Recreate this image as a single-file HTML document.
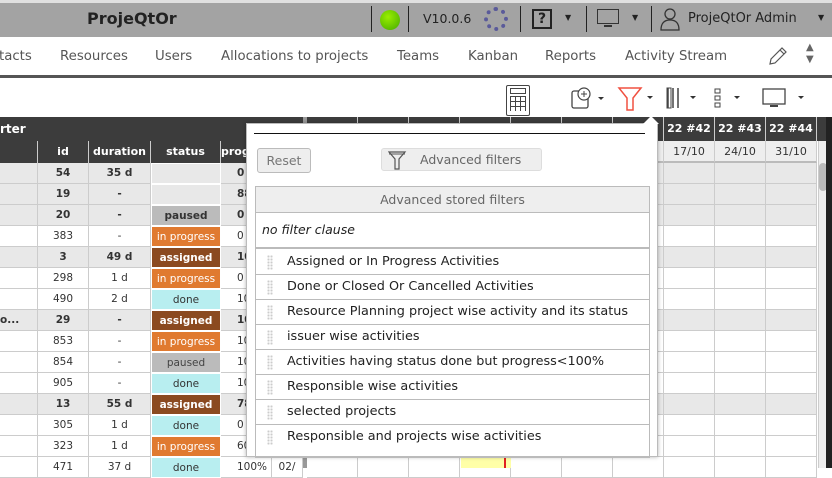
<!DOCTYPE html>
<html><head><meta charset="utf-8"><style>
*{box-sizing:border-box;margin:0;padding:0}
body{width:832px;height:468px;overflow:hidden;font-family:"DejaVu Sans","Liberation Sans",sans-serif;background:#fff;position:relative;font-size:13px;color:#333}
.abs{position:absolute}
#top{left:0;top:0;width:832px;height:37px;background:#a3a3a3;border-top:3px solid #e0e0e0}
#menu{left:0;top:37px;width:832px;height:41px;background:#fff;border-bottom:3px solid #555}
#menu span{position:absolute;top:12px;font-size:13.3px;color:#555;white-space:nowrap}
.th{background:#3c3c3c;color:#fff;font-weight:bold;font-size:11px}
.cell{position:absolute;text-align:center;font-size:10.5px;height:21px;line-height:20px;border-right:1px solid #ccc;border-bottom:1px solid #ccc;white-space:nowrap;overflow:hidden}
.pop{left:246px;top:123px;width:412px;height:334px;background:#fff;border:1px solid #bbb;box-shadow:0 0 4px rgba(0,0,0,.3)}
.item{position:absolute;left:8px;width:395px;height:25px;border-bottom:1px solid #bbb;font-size:12.8px;line-height:24px;padding-left:32px;color:#222;white-space:nowrap}
.grip{position:absolute;left:12px;top:5px;width:6px;height:15px;background-image:radial-gradient(#ccc 1px,transparent 1.2px);background-size:3px 3px}
</style></head><body>
<div id="top" class="abs">
 <div class="abs" style="left:87px;top:6px;font-weight:bold;font-size:16px;color:#222">ProjeQtOr</div>
 <div class="abs" style="left:371px;top:3px;width:1px;height:26px;background:#222"></div>
 <div class="abs" style="left:380px;top:7px;width:20px;height:20px;border-radius:50%;background:radial-gradient(circle at 40% 35%,#9e0,#4a0)"></div>
 <div class="abs" style="left:408px;top:3px;width:1px;height:26px;background:#222"></div>
 <div class="abs" style="left:423px;top:8px;font-size:12.5px;color:#222">V10.0.6</div>
 <div class="abs" style="left:484px;top:4px;width:24px;height:24px;border-radius:50%;border:4px dotted #5a5a9a"></div>
 <div class="abs" style="left:520px;top:3px;width:1px;height:26px;background:#222"></div>
 <div class="abs" style="left:532px;top:6px;width:20px;height:20px;border:2px solid #222;font-weight:bold;font-size:14px;text-align:center;line-height:16px;color:#222">?</div>
 <div class="abs" style="left:565px;top:10px;font-size:8px;color:#222">▼</div>
 <div class="abs" style="left:586px;top:3px;width:1px;height:26px;background:#222"></div>
 <div class="abs" style="left:597px;top:6px;width:22px;height:15px;border:1.5px solid #333"></div>
 <div class="abs" style="left:604px;top:22px;width:8px;height:2px;background:#333"></div>
 <div class="abs" style="left:632px;top:10px;font-size:8px;color:#222">▼</div>
 <div class="abs" style="left:651px;top:3px;width:1px;height:26px;background:#222"></div>
 <svg class="abs" style="left:660px;top:4px" width="20" height="24"><circle cx="10" cy="7" r="5" fill="none" stroke="#333" stroke-width="1.3"/><path d="M1 23 Q1 13 10 13 Q19 13 19 23 Z" fill="none" stroke="#333" stroke-width="1.3"/></svg>
 <div class="abs" style="left:688px;top:8px;font-size:13px;color:#222;white-space:nowrap">ProjeQtOr Admin</div>
 <div class="abs" style="left:818px;top:10px;font-size:8px;color:#222">▼</div>
</div>
<div id="menu" class="abs">
 <span style="left:-1px">tacts</span><span style="left:60px">Resources</span><span style="left:155px">Users</span><span style="left:221px">Allocations to projects</span><span style="left:397px">Teams</span><span style="left:468px">Kanban</span><span style="left:545px">Reports</span><span style="left:625px">Activity Stream</span>
 <svg class="abs" style="left:767px;top:8px" width="22" height="22"><path d="M3 19 L4 14 L15 3 L19 7 L8 18 Z M13 5 L17 9" fill="none" stroke="#555" stroke-width="1.2"/></svg>
 <div class="abs" style="left:806px;top:5px;font-size:10px;color:#666;line-height:12px">▲<br>▼</div>
</div>
<div class="abs" style="left:506px;top:85px;width:24px;height:31px;border:1.5px solid #444;border-radius:2px;background:#fff"><div style="margin:2px 3px;height:6px;border:1px solid #444"></div><div style="margin:1px 3px;height:15px;background-image:linear-gradient(#444 1px,transparent 1px),linear-gradient(90deg,#444 1px,transparent 1px);background-size:5px 5px"></div></div>
<svg class="abs" style="left:570px;top:86px" width="36" height="24"><rect x="2" y="5" width="16" height="17" rx="2" fill="none" stroke="#444" stroke-width="1.3"/><circle cx="14" cy="8" r="6" fill="#fff" stroke="#444" stroke-width="1.2"/><path d="M14 5v6M11 8h6" stroke="#444"/><path d="M28 11h6l-3 3z" fill="#333"/></svg>
<svg class="abs" style="left:617px;top:86px" width="40" height="26"><path d="M2 2h22l-8 10v12h-6V12z" fill="none" stroke="#f05040" stroke-width="1.5"/><path d="M30 10h6l-3 3z" fill="#333"/></svg>
<svg class="abs" style="left:665px;top:86px" width="36" height="24"><path d="M3 2v20M8 2v20M13 2v20" stroke="#444" stroke-width="1.5"/><rect x="2" y="2" width="4" height="20" fill="none" stroke="#444"/><path d="M25 10h6l-3 3z" fill="#333"/></svg>
<svg class="abs" style="left:712px;top:86px" width="36" height="24"><rect x="3" y="3" width="5" height="4" fill="none" stroke="#444"/><rect x="3" y="10" width="5" height="4" fill="none" stroke="#444"/><rect x="3" y="17" width="5" height="4" fill="none" stroke="#444"/><path d="M22 10h6l-3 3z" fill="#333"/></svg>
<svg class="abs" style="left:760px;top:86px" width="50" height="24"><rect x="3" y="3" width="22" height="15" fill="none" stroke="#444" stroke-width="1.3"/><path d="M10 20h8" stroke="#444" stroke-width="2"/><path d="M38 10h6l-3 3z" fill="#333"/></svg>

<div class="abs th" style="left:0;top:117px;width:305px;height:24px;line-height:24px;font-size:12px">rter</div>
<div class="abs" style="left:303px;top:117px;width:4px;height:351px;background:#999"></div>
<div class="abs th" style="left:307px;top:117px;width:525px;height:24px"></div>
<div class="abs th" style="left:0;top:141px;width:305px;height:22px"></div>
<div id="rows"></div>
<div class="abs" style="left:818px;top:141px;width:14px;height:327px;background:#eee;border-left:1px solid #ccc"></div>
<div class="abs" style="left:819px;top:163px;width:8px;height:28px;background:#bbb;border-radius:4px"></div>
<div class="abs" style="left:826px;top:117px;width:6px;height:351px;background:#222"></div>
<div class="abs" style="left:461px;top:457px;width:50px;height:11px;background:#ffffa8"></div>
<div class="abs" style="left:504px;top:457px;width:2px;height:11px;background:#e02020"></div>

<div class="abs pop">
 <div class="abs" style="left:7px;top:9px;width:391px;height:1px;background:#111"></div>
 <div class="abs" style="left:10px;top:24px;width:54px;height:25px;border:1px solid #bbb;border-radius:3px;background:#eee;color:#777;font-size:12.5px;text-align:center;line-height:23px">Reset</div>
 <div class="abs" style="left:134px;top:24px;width:161px;height:23px;border:1px solid #ddd;border-radius:3px;background:#eee;color:#666;font-size:12.5px;line-height:22px;padding-left:38px;white-space:nowrap">Advanced filters</div>
 <svg class="abs" style="left:141px;top:27px" width="20" height="20"><path d="M1 1h16l-6 7v10h-4V8z" fill="none" stroke="#555" stroke-width="1.2"/><path d="M1 3h16" stroke="#555"/></svg>
 <div class="abs" style="left:8px;top:62px;width:395px;height:272px;border:1px solid #bbb"></div>
 <div class="abs" style="left:8px;top:62px;width:395px;height:27px;background:#eee;border:1px solid #bbb;color:#666;font-size:12.5px;text-align:center;line-height:26px">Advanced stored filters</div>
 <div class="abs" style="left:8px;top:89px;width:395px;height:36px;border:1px solid #bbb;border-top:0;border-bottom:2px solid #bbb;font-style:italic;font-size:12.5px;line-height:34px;padding-left:6px;color:#222">no filter clause</div>
 <div class="item" style="top:126px"><i class="grip"></i>Assigned or In Progress Activities</div>
 <div class="item" style="top:151px"><i class="grip"></i>Done or Closed Or Cancelled Activities</div>
 <div class="item" style="top:176px"><i class="grip"></i>Resource Planning project wise activity and its status</div>
 <div class="item" style="top:201px"><i class="grip"></i>issuer wise activities</div>
 <div class="item" style="top:226px"><i class="grip"></i>Activities having status done but progress&lt;100%</div>
 <div class="item" style="top:251px"><i class="grip"></i>Responsible wise activities</div>
 <div class="item" style="top:276px"><i class="grip"></i>selected projects</div>
 <div class="item" style="top:301px;border-bottom:0"><i class="grip"></i>Responsible and projects wise activities</div>
</div>
<div class="abs" style="left:643px;top:116px;width:0;height:0;border-left:8px solid transparent;border-right:8px solid transparent;border-bottom:8px solid #fff"></div>
<script>
var h='';
var cols=[[0,38,''],[38,51,'id'],[89,62,'duration'],[151,70,'status'],[221,51,'progress'],[272,31,'']];
cols.forEach(function(c){h+='<div class="abs th" style="left:'+c[0]+'px;top:141px;width:'+c[1]+'px;height:22px;line-height:22px;text-align:center;border-right:1px solid #ccc;overflow:hidden;font-size:11px">'+c[2]+'</div>';});
var lab={664:['22 #42','17/10'],715:['22 #43','24/10'],766:['22 #44','31/10']};
for(var i=0;i<10;i++){var x=307+i*51,L=lab[x]||['',''];h+='<div class="abs th" style="left:'+x+'px;top:117px;width:51px;height:24px;line-height:24px;text-align:center;border-right:1px solid #ccc;font-size:11px">'+L[0]+'</div>';
h+='<div class="abs" style="left:'+x+'px;top:141px;width:51px;height:22px;line-height:22px;text-align:center;background:#eee;border-right:1px solid #ccc;border-bottom:2px solid #bbb;font-size:11px">'+L[1]+'</div>';}
var R=[[54,'35 d','',1,'0'],[19,'-','',1,'88'],[20,'-','paused',1,'0'],[383,'-','in progress',0,'0'],[3,'49 d','assigned',1,'100'],[298,'1 d','in progress',0,'0'],[490,'2 d','done',0,'10'],[29,'-','assigned',1,'100'],[853,'-','in progress',0,'10'],[854,'-','paused',0,'10'],[905,'-','done',0,'10'],[13,'55 d','assigned',1,'78'],[305,'1 d','done',0,'0'],[323,'1 d','in progress',0,'60'],[471,'37 d','done',0,'100%']];
var SC={'paused':'#bbb','in progress':'#e07a30','assigned':'#8b4a20','done':'#b8eef0'};
R.forEach(function(r,i){var y=163+i*21,bg=r[3]?'#e8e8e8':'#fff',fw=r[3]?'bold':'normal';
h+='<div class="cell" style="left:0;top:'+y+'px;width:38px;background:'+bg+';font-weight:bold;text-align:left">'+(r[0]==29?'o...':'')+'</div>';
h+='<div class="cell" style="left:38px;top:'+y+'px;width:51px;background:'+bg+';font-weight:'+fw+'">'+r[0]+'</div>';
h+='<div class="cell" style="left:89px;top:'+y+'px;width:62px;background:'+bg+';font-weight:'+fw+'">'+r[1]+'</div>';
var s=r[2],sb=s?SC[s]:bg,col=(s=='assigned'||s=='in progress')?'#fff':'#333';if(s=='paused'&&!r[3])col='#444';
h+='<div class="cell" style="left:151px;top:'+y+'px;width:70px;background:'+sb+';color:'+col+';font-weight:'+(s=='assigned'||s=='paused'&&r[3]?'bold':'normal')+';border:1px solid #fff">'+s+'</div>';
h+='<div class="cell" style="left:221px;top:'+y+'px;width:51px;background:'+bg+';font-weight:'+fw+';text-align:left;padding-left:16px">'+r[4]+'</div>';
h+='<div class="cell" style="left:272px;top:'+y+'px;width:31px;background:'+bg+'">'+(i==14?'02/':'')+'</div>';
for(var k=0;k<10;k++)h+='<div class="cell" style="left:'+(307+k*51)+'px;top:'+y+'px;width:51px;background:'+bg+'"></div>';});
document.getElementById('rows').innerHTML=h;
</script>
</body></html>
